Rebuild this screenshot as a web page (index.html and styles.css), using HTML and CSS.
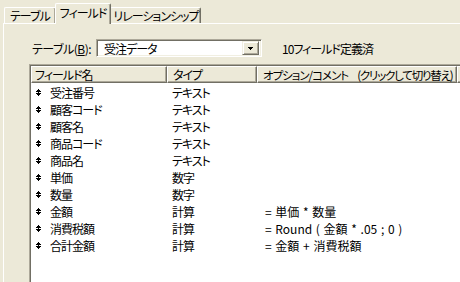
FILE: index.html
```html
<!DOCTYPE html>
<html lang="ja">
<head>
  <meta charset="UTF-8">
  <title>フィールド定義</title>
  <link rel="stylesheet" href="styles.css">
</head>
<body>
  <div class="tabs">
    <div class="tab">テーブル</div>
    <div class="tab active">フィールド</div>
    <div class="tab last">リレーションシップ</div>
  </div>

  <div class="panel">
    <div class="table-bar">
      <span class="table-label">テーブル(<u>B</u>):</span>
      <div class="combo">
        <span class="combo-text">受注データ</span>
        <span class="combo-btn">
          <svg width="5" height="3" viewBox="0 0 5 3" shape-rendering="crispEdges">
            <rect x="0" y="0" width="5" height="1" fill="#000"/>
            <rect x="1" y="1" width="3" height="1" fill="#000"/>
            <rect x="2" y="2" width="1" height="1" fill="#000"/>
          </svg>
        </span>
      </div>
      <span class="count">10フィールド定義済</span>
    </div>

    <div class="list">
      <div class="list-head">
        <div class="head-cell col-name">フィールド名</div>
        <div class="head-cell col-type">タイプ</div>
        <div class="head-cell col-opt"><span>オプション/コメント</span><span class="hint">(クリックして切り替え)</span></div>
        <div class="head-cell head-fill"></div>
      </div>
      <div class="list-body" id="rows"></div>
    </div>
  </div>

  <script>
    // フィールド一覧
    const fields = [
      ['受注番号', 'テキスト', ''],
      ['顧客コード', 'テキスト', ''],
      ['顧客名', 'テキスト', ''],
      ['商品コード', 'テキスト', ''],
      ['商品名', 'テキスト', ''],
      ['単価', '数字', ''],
      ['数量', '数字', ''],
      ['金額', '計算', '= 単価 * 数量'],
      ['消費税額', '計算', '= Round ( 金額 * .05 ; 0 )'],
      ['合計金額', '計算', '= 金額 + 消費税額']
    ];

    const icon = '<svg class="move-icon" width="5" height="7" viewBox="0 0 5 7" shape-rendering="crispEdges">' +
      '<rect x="2" y="0" width="1" height="1"/><rect x="1" y="1" width="3" height="1"/>' +
      '<rect x="0" y="2" width="5" height="1"/><rect x="2" y="3" width="1" height="1"/>' +
      '<rect x="0" y="4" width="5" height="1"/><rect x="1" y="5" width="3" height="1"/>' +
      '<rect x="2" y="6" width="1" height="1"/></svg>';

    const rows = document.getElementById('rows');
    fields.forEach(f => {
      const row = document.createElement('div');
      row.className = 'row';
      row.innerHTML =
        '<div class="cell col-name">' + icon + '<span>' + f[0] + '</span></div>' +
        '<div class="cell col-type">' + f[1] + '</div>' +
        '<div class="cell col-opt">' + f[2] + '</div>';
      rows.appendChild(row);
    });
  </script>
</body>
</html>
```

FILE: styles.css
```css
* {
  margin: 0;
  padding: 0;
  box-sizing: border-box;
}

body {
  width: 460px;
  height: 282px;
  overflow: hidden;
  background: #ece9d8;
  color: #000;
  font-family: "Noto Sans CJK JP", "Noto Sans", sans-serif;
  font-size: 12px;
  font-feature-settings: "palt";
  letter-spacing: -1px;
}

/* タブ */
.tabs {
  display: flex;
  align-items: flex-end;
  height: 23px;
  padding-left: 4px;
}

.tab {
  height: 16px;
  line-height: 15px;
  padding: 0 5px;
  border-top: 1px solid #fff;
  border-left: 1px solid #fff;
  border-right: 1px solid #716f64;
  border-radius: 2px 2px 0 0;
  box-shadow: inset -1px 0 #aca899;
  white-space: nowrap;
}

.tab.active {
  position: relative;
  z-index: 1;
  height: 21px;
  line-height: 18px;
  margin: 0 -1px -1px -1px;
  padding: 0 4px 0 4px;
  background: #ece9d8;
}

.tab.last {
  padding: 0 1px 0 2px;
}

.panel {
  margin-left: 3px;
  height: 259px;
  border-top: 1px solid #fff;
  border-left: 1px solid #fff;
}

/* テーブル選択 */
.table-bar {
  display: flex;
  align-items: center;
  height: 18px;
  margin: 15px 0 0 28px;
}

.table-label {
  width: 64px;
  white-space: nowrap;
  letter-spacing: -0.5px;
}

.combo {
  display: flex;
  align-items: center;
  width: 166px;
  height: 18px;
  background: #fff;
  border: 1px solid;
  border-color: #aca899 #fff #fff #aca899;
  box-shadow: inset 1px 1px #716f64, inset -1px -1px #f1efe2;
  padding: 1px;
}

.combo-text {
  flex: 1;
  padding-left: 6px;
}

.combo-btn {
  display: flex;
  align-items: center;
  justify-content: center;
  width: 17px;
  height: 14px;
  margin-right: 1px;
  background: #ece9d8;
  border: 1px solid;
  border-color: #f1efe2 #716f64 #716f64 #f1efe2;
  box-shadow: inset 1px 1px #fff, inset -1px -1px #aca899;
}

.count {
  margin-left: 20px;
  white-space: nowrap;
}

/* フィールド一覧 */
.list {
  width: 445px;
  height: 230px;
  margin: 7px 0 0 25px;
  background: #fff;
  border: 1px solid;
  border-color: #aca899 #fff #fff #aca899;
  box-shadow: inset 1px 1px #716f64;
  padding: 1px 0 0 1px;
  overflow: hidden;
}

.list-head {
  display: flex;
  height: 17px;
}

.head-cell {
  height: 17px;
  line-height: 16px;
  background: #ece9d8;
  border-top: 1px solid #fff;
  border-left: 1px solid #fff;
  border-right: 1px solid #716f64;
  border-bottom: 1px solid #716f64;
  box-shadow: inset -1px -1px #aca899;
  white-space: nowrap;
  overflow: hidden;
}

.head-cell.col-name {
  padding-left: 3px;
}

.head-cell.col-type {
  padding-left: 5px;
}

.head-cell.col-opt {
  padding-left: 5px;
  font-size: 11.5px;
}

.hint {
  margin-left: 9px;
  letter-spacing: -1.2px;
}

.head-fill {
  flex: 1;
}

.col-name {
  width: 136px;
}

.col-type {
  width: 90px;
}

.col-opt {
  width: 200px;
}

.list-body {
  padding-top: 1px;
}

.row {
  display: flex;
  height: 17px;
  align-items: center;
}

.cell {
  white-space: nowrap;
}

.cell.col-name {
  display: flex;
  align-items: center;
  padding-left: 5px;
  gap: 9px;
}

.cell.col-type {
  padding-left: 5px;
}

.cell.col-opt {
  padding-left: 8px;
  letter-spacing: 0;
  word-spacing: 1px;
}

.move-icon {
  fill: #000;
}
```
